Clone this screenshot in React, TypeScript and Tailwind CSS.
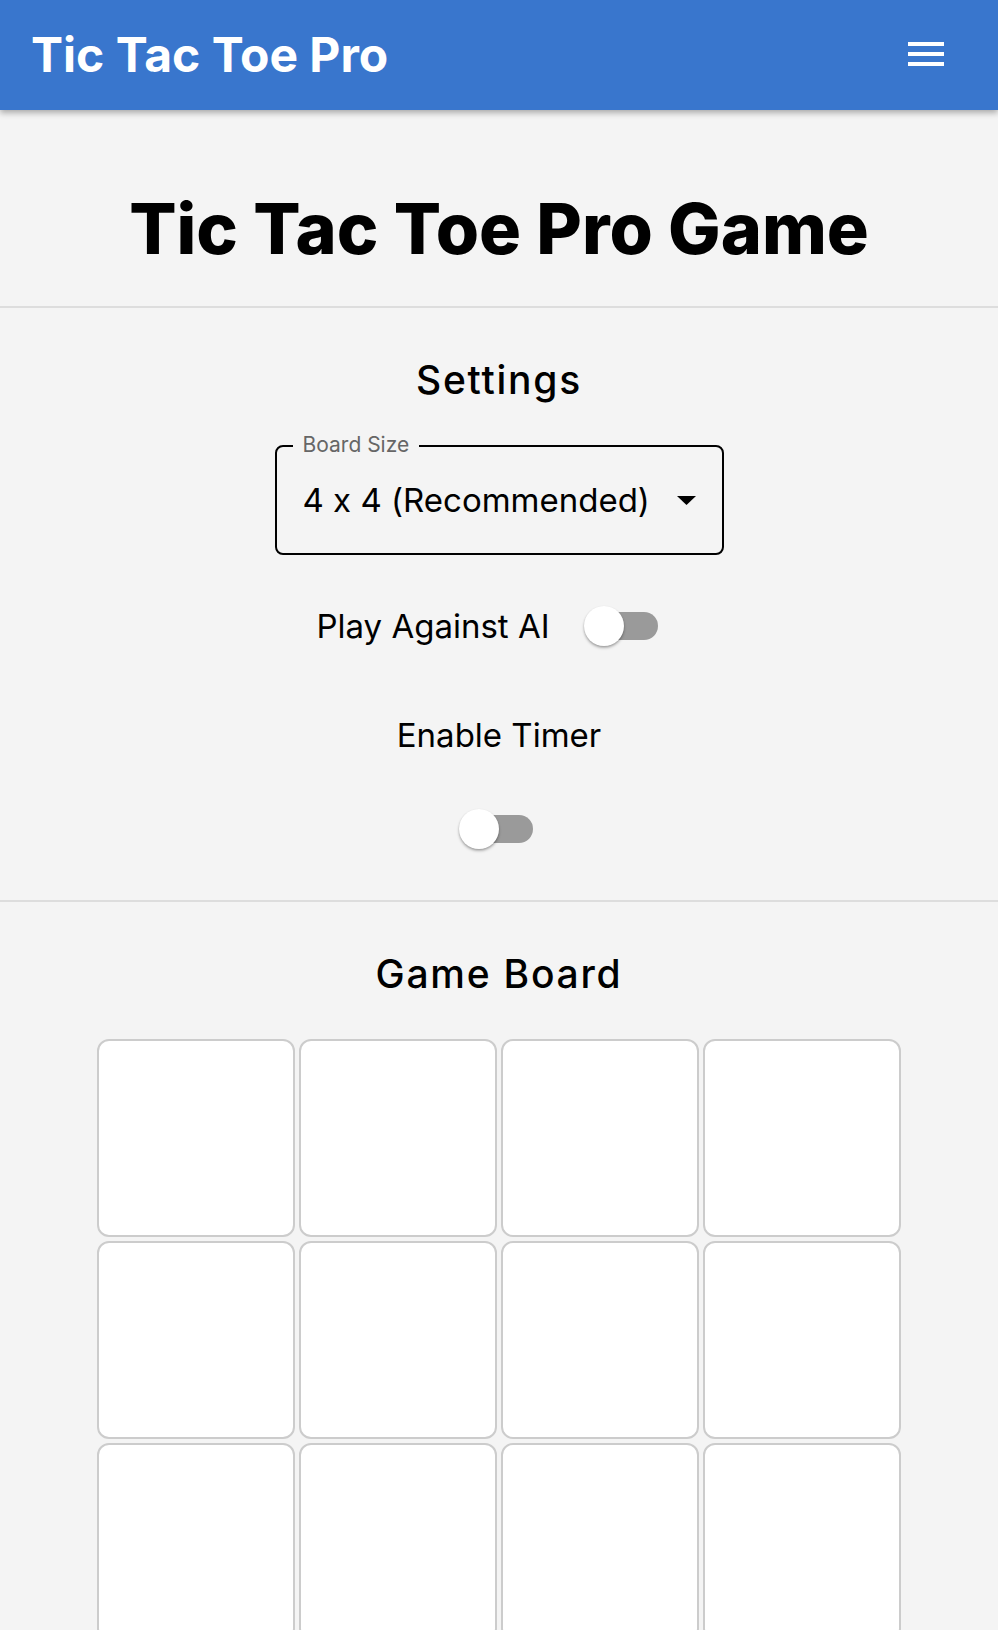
import { useState } from 'react';

function Toggle({ on, onClick }: { on: boolean; onClick: () => void }) {
  return (
    <button onClick={onClick} className="relative w-[116px] h-[76px] shrink-0">
      <span className={`absolute left-[24px] top-[24px] w-[68px] h-[28px] rounded-full ${on ? 'bg-[#90b4e6]' : 'bg-[#9a9a9a]'}`} />
      <span
        className={`absolute top-[18px] w-[40px] h-[40px] rounded-full bg-white shadow-[0_2px_3px_rgba(0,0,0,0.25),0_1px_2px_rgba(0,0,0,0.15)] ${on ? 'left-[58px] bg-[#3976cd]' : 'left-[18px]'}`}
      />
    </button>
  );
}

export default function App() {
  const [size] = useState(4);
  const [ai, setAi] = useState(false);
  const [timer, setTimer] = useState(false);
  const cells = Array.from({ length: size * size });

  return (
    <div className="min-h-screen bg-[#f4f4f4] font-['Inter',sans-serif] [font-feature-settings:'calt'_0] text-black">
      <header className="h-[110px] bg-[#3976cd] shadow-[0_3px_6px_rgba(0,0,0,0.3)] flex items-center justify-between pl-[31px] pr-[54px] relative z-10">
        <h1 className="text-white text-[48px] font-bold leading-none">Tic Tac Toe Pro</h1>
        <svg width="36" height="24" viewBox="0 0 36 24" className="mt-[-2px]">
          <rect x="0" y="0" width="36" height="4" fill="white" />
          <rect x="0" y="10" width="36" height="4" fill="white" />
          <rect x="0" y="20" width="36" height="4" fill="white" />
        </svg>
      </header>

      <section className="h-[196px] flex items-center justify-center pt-[42px]">
        <h2 className="text-[70px] font-extrabold leading-none">Tic Tac Toe Pro Game</h2>
      </section>
      <div className="h-[2px] bg-[#dddddd]" />

      <section className="h-[592px] flex flex-col items-center pt-[52px]">
        <h3 className="text-[39px] font-medium leading-[40px] tracking-[1.75px]">Settings</h3>
        <div className="relative mt-[45px] w-[449px] h-[110px] rounded-[8px] border-2 border-black">
          <span className="absolute left-[16px] top-[-16px] px-[10px] bg-[#f4f4f4] text-[21px] leading-[28px] text-[#666666]">Board Size</span>
          <div className="h-full flex items-center justify-between pl-[26px] pr-[26px]">
            <span className="text-[33px] leading-none">4 x 4 (Recommended)</span>
            <svg width="19" height="9" viewBox="0 0 19 9">
              <path d="M0 0 L19 0 L9.5 9 Z" fill="black" />
            </svg>
          </div>
        </div>
        <div className="mt-[33px] flex items-center gap-[16px]">
          <span className="text-[33px] leading-none">Play Against AI</span>
          <Toggle on={ai} onClick={() => setAi(!ai)} />
        </div>
        <p className="mt-[51px] text-[33px] leading-[40px]">Enable Timer</p>
        <div className="mt-[36px]">
          <Toggle on={timer} onClick={() => setTimer(!timer)} />
        </div>
      </section>
      <div className="h-[2px] bg-[#dddddd]" />

      <section className="flex flex-col items-center pt-[52px] pb-[40px]">
        <h3 className="text-[39px] font-medium leading-[40px] tracking-[1.75px]">Game Board</h3>
        <div className="mt-[45px] grid grid-cols-4 gap-[4px] w-[804px]">
          {cells.map((_, i) => (
            <button key={i} className="h-[198px] bg-white border-2 border-[#cccccc] rounded-[12px]" />
          ))}
        </div>
      </section>
    </div>
  );
}
